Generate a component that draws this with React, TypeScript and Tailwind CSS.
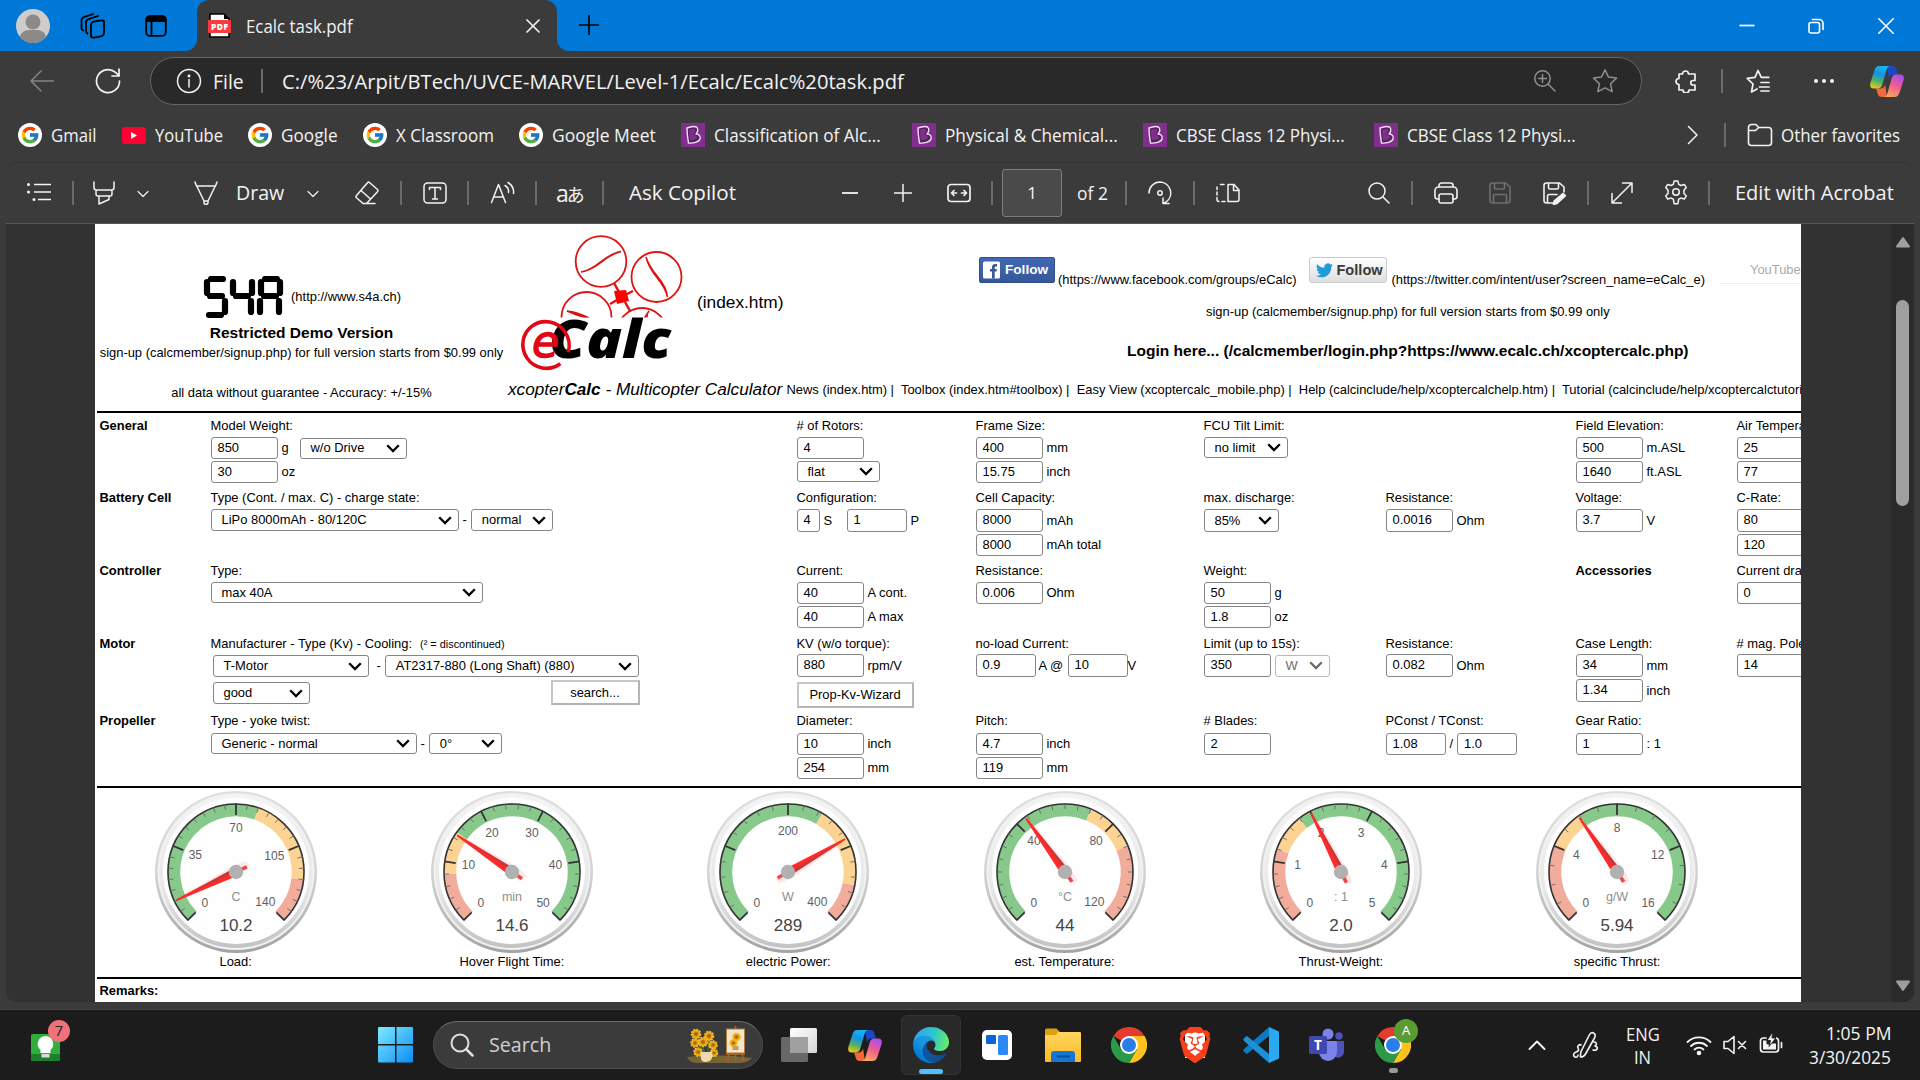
import { useLayoutEffect, useRef, type ReactNode } from "react";
import { FcGoogle } from "react-icons/fc";
import { SiBrave } from "react-icons/si";

/* ---------- shared helpers ---------- */

function Ui({ w, className = "", children }: { w: number; className?: string; children: string }) {
  const ref = useRef<HTMLSpanElement>(null);
  useLayoutEffect(() => {
    const el = ref.current;
    if (el && el.offsetWidth > 0) el.style.transform = `scaleX(${w / el.offsetWidth})`;
  }, [w]);
  return (
    <span className={`flex shrink-0 ${className}`} style={{ width: w }}>
      <span ref={ref} className="inline-block shrink-0 origin-left whitespace-nowrap font-['Open_Sans',sans-serif] leading-[26px]">
        {children}
      </span>
    </span>
  );
}

function Ico({ w = 24, h = 24, vb, className = "", sw = 1.5, children }: { w?: number; h?: number; vb?: string; className?: string; sw?: number; children: ReactNode }) {
  return (
    <svg width={w} height={h} viewBox={vb ?? `0 0 ${w} ${h}`} fill="none" stroke="currentColor" strokeWidth={sw} strokeLinecap="round" strokeLinejoin="round" className={`block shrink-0 ${className}`}>
      {children}
    </svg>
  );
}

const Sep = ({ className = "" }: { className?: string }) => <span className={`h-6 w-[2px] shrink-0 bg-[#6b6b6b] ${className}`} />;

function Copilot({ id, w, h, className = "" }: { id: string; w: number; h: number; className?: string }) {
  return (
    <svg width={w} height={h} viewBox="0 0 34 31" className={`block shrink-0 ${className}`}>
      <defs>
        <linearGradient id={`${id}a`} x1="0.5" y1="0" x2="0.2" y2="1">
          <stop offset="0" stopColor="#19b4f5" />
          <stop offset="0.35" stopColor="#1492e0" />
          <stop offset="0.65" stopColor="#4fb06c" />
          <stop offset="1" stopColor="#f6c70c" />
        </linearGradient>
        <linearGradient id={`${id}b`} x1="0.7" y1="0" x2="0.3" y2="1">
          <stop offset="0" stopColor="#a94ff0" />
          <stop offset="0.45" stopColor="#ec5a92" />
          <stop offset="1" stopColor="#fba65c" />
        </linearGradient>
      </defs>
      <path d="M17 0h5.500c2 0 3.200 1.200 3.700 3l1.700 5.500h-4c-3 0-4.200 1.500-5 4z" fill="#1b48c8" />
      <path d="M17 31h-5.500c-2 0-3.200-1.200-3.700-3l-1.700-5.500h4c3 0 4.200-1.500 5-4z" fill="#f4663c" />
      <path d="M9.500 0h10.500c-2 .3-2.900 1.800-3.500 4l-4.300 15c-.7 2.300-2 3.500-4.200 3.500H3.700C.5 22.500-.4 20 .4 17L4.500 4.200C5.400 1.400 6.900 0 9.500 0z" fill={`url(#${id}a)`} />
      <path d="M24.500 31H14c2-.3 2.900-1.800 3.500-4l4.300-15c.7-2.300 2-3.500 4.200-3.500h4.300c3.200 0 4.100 2.500 3.300 5.500l-4.100 12.800c-.9 2.800-2.400 4.200-5 4.200z" fill={`url(#${id}b)`} />
    </svg>
  );
}

/* ---------- browser chrome ---------- */

function TitleBar() {
  return (
    <div className="flex h-[51px] items-center bg-[#0078d7]">
      <svg width="34" height="34" viewBox="0 0 34 34" className="ml-4 shrink-0">
        <circle cx="17" cy="17" r="17" fill="#cfcdcb" />
        <circle cx="17" cy="13" r="7.500" fill="#8d8986" />
        <path d="M4 28c1-5 5-7 9-7h8c4 0 8 2 9 7a17 17 0 0 1-26 0z" fill="#8d8986" />
      </svg>
      <Ico w={26} h={26} className="ml-[30px] text-black" sw={1.800}>
        <rect x="11" y="8" width="13" height="16" rx="3" transform="skewY(-10) translate(0 3)" />
        <path d="M7.500 20.500c-1.200-.5-1.500-1.400-1.500-2.700V9.500c0-2 .8-2.800 2.500-3.400L18 3" />
        <path d="M3.200 17.500C2 17 1.500 16 1.500 14.700V7.500c0-2 .8-2.900 2.500-3.500L13 1.200" />
      </Ico>
      <Ico w={22} h={22} className="ml-[39px] text-black" sw={1.800}>
        <rect x="1.200" y="1.200" width="19.600" height="19.600" rx="3.500" />
        <path d="M1.500 6V4.500a3 3 0 0 1 3-3h13a3 3 0 0 1 3 3V6z" fill="currentColor" />
        <path d="M6.500 7v13" />
      </Ico>
      <div className="ml-[18px] flex h-full w-[384px] shrink-0">
        <span className="h-full w-3 bg-[#3b3b3b]">
          <span className="block h-full w-full rounded-br-[12px] bg-[#0078d7]" />
        </span>
        <div className="flex h-full w-[360px] items-center rounded-t-[12px] bg-[#3b3b3b] text-[#f0f0f0]">
          <svg width="24" height="25" viewBox="0 0 24 25" className="ml-[11px] shrink-0">
            <path d="M2 1h14l5 5v18H2z" fill="#fff" stroke="#000" strokeWidth="1.500" />
            <path d="M16 1l5 5h-5z" fill="#000" />
            <rect x="0" y="7" width="23" height="13" rx="1" fill="#f93b3e" />
            <text x="11.500" y="16.800" textAnchor="middle" fontFamily="Open Sans" fontWeight="800" fontSize="8.500" fill="#fff" textLength="17">PDF</text>
          </svg>
          <Ui w={107} className="ml-[14px] text-[17.500px]">Ecalc task.pdf</Ui>
          <Ico w={14} h={14} className="ml-[173px]" sw={1.700}>
            <path d="M1 1l12 12M13 1L1 13" />
          </Ico>
        </div>
        <span className="h-full w-3 bg-[#3b3b3b]">
          <span className="block h-full w-full rounded-bl-[12px] bg-[#0078d7]" />
        </span>
      </div>
      <Ico w={20} h={20} className="-mt-[1px] ml-[10px] text-black" sw={1.600}>
        <path d="M10 0v20M0 10h20" strokeLinecap="butt" />
      </Ico>
      <div className="ml-auto flex items-center text-white">
        <Ico w={16} h={16} sw={1.700}><path d="M.5 7.500h15" strokeLinecap="butt" /></Ico>
        <Ico w={16} h={16} className="ml-[53px]" sw={1.600}>
          <rect x="1" y="4.500" width="10.500" height="10.500" rx="2" />
          <path d="M4.500 1.500h6.500a4 4 0 0 1 4 4v6" />
        </Ico>
        <Ico w={16} h={16} className="ml-[54px] mr-[26px]" sw={1.600}><path d="M.8.8l14.400 14.400M15.200.8L.8 15.200" /></Ico>
      </div>
    </div>
  );
}

function AddressBar() {
  return (
    <div className="flex h-[60px] items-center text-[#f3f3f3]">
      <Ico w={24} h={22} className="ml-[30px] text-[#858585]"><path d="M24 11H1M11 1L1 11l10 10" /></Ico>
      <Ico w={26} h={26} className="ml-[41px]" sw={1.700}>
        <path d="M24.500 13a11.500 11.500 0 1 1-4-8.600l3.500 3.100" />
        <path d="M24 1v7h-7" />
      </Ico>
      <div className="ml-[29px] flex h-[48px] w-[1492px] shrink-0 items-center rounded-full border border-[#666] bg-[#292929]">
        <Ico w={26} h={26} className="ml-[25px]">
          <circle cx="13" cy="13" r="11.500" />
          <path d="M13 11.500v7.500" /><circle cx="13" cy="8" r=".7" />
        </Ico>
        <Ui w={31} className="ml-[11px] mt-[1px] text-[20px]">File</Ui>
        <Sep className="ml-[17px]" />
        <Ui w={622} className="ml-[19px] mt-[1px] text-[20px]">C:/%23/Arpit/BTech/UVCE-MARVEL/Level-1/Ecalc/Ecalc%20task.pdf</Ui>
        <Ico w={22} h={22} className="ml-[630px] text-[#8f8f8f]">
          <circle cx="8.500" cy="8.500" r="7.700" /><path d="M14 14l7 7M8.500 4.500v8M4.500 8.500h8" />
        </Ico>
        <Ico w={26} h={26} className="ml-[36px] text-[#8f8f8f]">
          <path d="M13 1.800l3.500 7.300 8 1-5.900 5.600 1.500 8L13 19.800l-7.100 3.900 1.500-8L1.500 10.100l8-1z" />
        </Ico>
      </div>
      <Ico w={24} h={24} className="ml-[32px]" sw={1.700}>
        <path d="M5 5h3.500a3 3 0 0 1 6 0H21v6.500h-2a2.200 2.200 0 0 0 0 4.500h2V21h-6a3 3 0 0 1-6 0H5v-5.500a3 3 0 0 1 0-6z" />
      </Ico>
      <Sep className="ml-[23px]" />
      <Ico w={26} h={26} className="ml-[22px]" sw={1.700}>
        <path d="M8 16l-5.800-5.600 7.800-1L13 2.500l3.300 6.800h7.500M8 16l-1.500 8 5.500-3M16 14.500h8M14.500 19h9.500M16 23h8" />
      </Ico>
      <Ico w={22} h={6} className="ml-[42px]" sw={0}>
        <g fill="currentColor"><circle cx="3" cy="3" r="2" /><circle cx="11" cy="3" r="2" /><circle cx="19" cy="3" r="2" /></g>
      </Ico>
      <Copilot id="cpt" w={34} h={31} className="ml-[35px]" />
    </div>
  );
}

const GIcon = () => (
  <span className="flex h-6 w-6 shrink-0 items-center justify-center rounded-full bg-white"><FcGoogle size={20} /></span>
);
const YtIcon = () => (
  <svg width="24" height="17" viewBox="0 0 24 17" className="shrink-0"><rect width="24" height="17" rx="3" fill="#ff0033" /><path d="M9 5v7l6-3.500z" fill="#fff" /></svg>
);
const BIcon = () => (
  <svg width="24" height="24" viewBox="0 0 24 24" className="shrink-0">
    <rect width="24" height="24" fill="#80308c" />
    <path d="M7.500 20q-1.500-8-1.500-15 6-2.500 9.500-1c2 1.500 1.500 5-.5 7 3.500 0 4.800 2.500 4 5-1 3-7 4.500-11.500 4z" fill="#56215f" stroke="#f1dff3" strokeWidth="1.400" strokeLinejoin="round" />
    <path d="M9 17q-1-5-1-10 4-1.500 6-.5 1 2.500-2 5 4 .5 4 3.500-2 2-7 2z" fill="#80308c" />
  </svg>
);

const bookmarks: { icon: ReactNode; text: string; w: number; ml: string }[] = [
  { icon: <GIcon />, text: "Gmail", w: 45, ml: "ml-[18px]" },
  { icon: <YtIcon />, text: "YouTube", w: 68, ml: "ml-[26px]" },
  { icon: <GIcon />, text: "Google", w: 57, ml: "ml-[25px]" },
  { icon: <GIcon />, text: "X Classroom", w: 98, ml: "ml-[25px]" },
  { icon: <GIcon />, text: "Google Meet", w: 104, ml: "ml-[25px]" },
  { icon: <BIcon />, text: "Classification of Alc...", w: 167, ml: "ml-[25px]" },
  { icon: <BIcon />, text: "Physical & Chemical...", w: 173, ml: "ml-[31px]" },
  { icon: <BIcon />, text: "CBSE Class 12 Physi...", w: 169, ml: "ml-[25px]" },
  { icon: <BIcon />, text: "CBSE Class 12 Physi...", w: 169, ml: "ml-[29px]" },
];

function Bookmarks() {
  return (
    <div className="flex h-[51px] items-center pb-[3px] text-[17.500px] text-[#f3f3f3]">
      {bookmarks.map((b, i) => (
        <div key={i} className={`flex items-center ${b.ml}`}>
          {b.icon}
          <Ui w={b.w} className="-mt-[1px] ml-[9px]">{b.text}</Ui>
        </div>
      ))}
      <Ico w={12} h={20} className="ml-[111px]" sw={1.500}><path d="M1.500 1.500l8.500 8.500-8.500 8.500" /></Ico>
      <Sep className="ml-[25px]" />
      <Ico w={26} h={24} className="ml-[21px]" sw={1.600}>
        <path d="M1.500 4.500a3 3 0 0 1 3-3h4.300l3 3h9.700a3 3 0 0 1 3 3V19.500a3 3 0 0 1-3 3h-17a3 3 0 0 1-3-3zM1.500 7.500h7l3.300-3" />
      </Ico>
      <Ui w={119} className="-mt-[1px] ml-[8px]">Other favorites</Ui>
    </div>
  );
}

const Chev = ({ className = "" }: { className?: string }) => (
  <Ico w={12} h={8} className={className} sw={1.200}><path d="M1 1.500l5 5 5-5" /></Ico>
);

function PdfToolbar() {
  return (
    <div className="mx-[6px] flex h-[62px] items-center rounded-t-[12px] border-b border-t border-b-[#585858] border-t-[#343434] text-[20px] text-[#f3f3f3]">
      <Ico className="-mt-[2px] ml-[21px]" sw={1.700}>
        <path d="M7 4.500h17M7 12h17M11 19.500h13" strokeLinecap="butt" />
        <g fill="currentColor" stroke="none"><circle cx="1.500" cy="4.500" r="1.500" /><circle cx="1.500" cy="12" r="1.500" /><circle cx="7" cy="19.500" r="1.500" /></g>
      </Ico>
      <Sep className="ml-[21px]" />
      <Ico className="ml-[18px]"><path d="M2 1v5.500a2.500 2.500 0 0 0 2.500 2.500h15A2.500 2.500 0 0 0 22 6.500V1M4 9v4c0 1.500 1 2 2 2h12c1 0 2-.5 2-2V9M7 15v8l10-4.500V15" /></Ico>
      <Chev className="ml-[21px] mt-[2px]" />
      <Ico className="ml-[45px]"><path d="M1 1l1.500 4h19L23 1M3 5.500l7 14.500h4l7-14.500M10 20v1.500c0 2.500 4 2.500 4 0V20" /></Ico>
      <Ui w={48} className="ml-[18px]">Draw</Ui>
      <Chev className="ml-[23px] mt-[2px]" />
      <Ico className="ml-[36px]"><path d="M14.500 1.500l8 7c.7.700.7 1.500 0 2.200L11.500 22.500H8L1.500 16.800c-.7-.7-.7-1.500 0-2.200L12.500 1.700c.6-.6 1.400-.7 2-.2zM6 9.500l9.500 8.500M11 22.500h9" /></Ico>
      <Sep className="ml-[21px]" />
      <Ico className="ml-[21px]"><rect x="1" y="2" width="22" height="20" rx="3.500" /><path d="M6.500 8.500V6.500h11v2M12 6.500v11.500M9.500 18h5" /></Ico>
      <Sep className="ml-[20px]" />
      <Ico w={26} className="ml-[21px]"><path d="M1.500 21.500L8.500 3.500l7 18M4 16h9M15 4.500a7 7 0 0 1 3.500 7M18 1.500c4 2.500 6 6.500 5.500 11" /></Ico>
      <Sep className="ml-[19px]" />
      <span className="ml-[19px] flex w-[27px] shrink-0 items-baseline whitespace-nowrap font-['Open_Sans'] text-[23px] leading-[24px]">
        a<span className="-ml-[2px] font-['Noto_Sans_CJK_JP',sans-serif] text-[18px] leading-[24px]">あ</span>
      </span>
      <Sep className="ml-[19px]" />
      <Ui w={107} className="ml-[25px]">Ask Copilot</Ui>
      <Ico w={16} className="ml-[106px]" sw={1.800}><path d="M0 12h16" strokeLinecap="butt" /></Ico>
      <Ico w={18} className="ml-[36px]"><path d="M9 3.500v17M.5 12h17" /></Ico>
      <Ico className="ml-[35px]" sw={1.700}><rect x="1" y="3.500" width="22" height="17" rx="3" /><path d="M4.500 12h5M4.500 12l2.500-2.500M4.500 12l2.500 2.500M19.500 12h-5M19.500 12L17 9.500M19.500 12L17 14.500" /></Ico>
      <Sep className="ml-[20px]" />
      <div className="ml-[9px] flex h-[48px] w-[60px] shrink-0 items-center justify-center rounded-[3px] border border-[#7d7d7d] bg-[#4a4a4a]">
        <span className="font-['Open_Sans'] text-[17px]">1</span>
      </div>
      <Ui w={31} className="ml-[15px] text-[18px]">of 2</Ui>
      <Sep className="ml-[17px]" />
      <Ico className="ml-[21px]"><path d="M1 12A11 11 0 0 1 12 1a11 11 0 0 1 6 20l-2.500 1.500M21 22.500h-6v-5.500" /><circle cx="12" cy="12" r="2.200" /></Ico>
      <Sep className="ml-[21px]" />
      <Ico className="ml-[21px]"><path d="M12 3.500h6l5 5.500v9.500a2 2 0 0 1-2 2h-9zM17.500 3.500V9.500H23" /><path d="M8 3.500H4.500M1 6v2.500M1 11v3M1 16.500v2c0 1 .8 2 2 2M6 20.500h3" /></Ico>
      <Ico w={22} className="ml-[128px]"><circle cx="9" cy="10" r="8" /><path d="M15 16l6 6" /></Ico>
      <Sep className="ml-[21px]" />
      <Ico className="ml-[21px]" sw={1.600}><path d="M5 6V4.500A2.500 2.500 0 0 1 7.500 2h9A2.500 2.500 0 0 1 19 4.500V6M5 18H3.500A2.500 2.500 0 0 1 1 15.500V9.500A3.500 3.500 0 0 1 4.500 6h15A3.500 3.500 0 0 1 23 9.500v6a2.500 2.500 0 0 1-2.500 2.500H19" /><rect x="5" y="13" width="14" height="9" rx="2" /></Ico>
      <Ico className="ml-[30px] text-[#6f6f6f]" sw={1.600}><path d="M2 4.500A2.500 2.500 0 0 1 4.500 2h13L22 6v13.500a2.500 2.500 0 0 1-2.500 2.500h-15A2.500 2.500 0 0 1 2 19.500zM6.500 2v4.500c0 1 .5 1.500 1.500 1.500h7c1 0 1.500-.5 1.500-1.500V2M5.500 22v-7c0-1 .5-1.500 1.500-1.500h10c1 0 1.500.5 1.500 1.500v7" /></Ico>
      <Ico className="ml-[30px]" sw={1.600}><path d="M11 22H4.500A2.500 2.500 0 0 1 2 19.500v-15A2.500 2.500 0 0 1 4.500 2h13L22 6v5M6.500 2v4.500c0 1 .5 1.500 1.500 1.500h7c1 0 1.500-.5 1.500-1.500V2M5.500 22v-7c0-1 .5-1.500 1.500-1.500h8" /><path d="M21 12.500l2.500 2-8.500 8-3.500.8.800-3.500z" fill="currentColor" /></Ico>
      <Sep className="ml-[21px]" />
      <Ico className="ml-[21px]"><path d="M2 22L22 2M12.500 2H22v9.500M2 12.500V22h9.500" /></Ico>
      <Ico w={26} h={26} vb="0 0 24 24" className="-mt-[2px] ml-[29px]" sw={1.400}>
        <path d="M10.300 1h3.400l.8 3.200 2 1 3.100-1 1.900 2.900-2.200 2.500v2.800l2.200 2.500-1.900 2.900-3.100-1-2 1-.8 4.200h-3.400l-.8-4.200-2-1-3.100 1-1.900-2.900 2.200-2.500V9.600L2.500 7.100l1.900-2.900 3.100 1 2-1z" transform="translate(0 .8)" />
        <circle cx="12" cy="12" r="3" />
      </Ico>
      <Sep className="ml-[19px]" />
      <Ui w={159} className="ml-[25px]">Edit with Acrobat</Ui>
    </div>
  );
}

/* ---------- document header ---------- */

function S4ALogo() {
  const seg = (x: number, on: string) => {
    const L: Record<string, [number, number, number, number]> = {
      a: [x + 5, 3, x + 17, 3],
      f: [x + 1, 6, x + 1, 17],
      b: [x + 20, 6, x + 20, 17],
      g: [x + 4, 20, x + 16, 20],
      e: [x, 25, x, 36],
      c: [x + 19, 25, x + 19, 36],
      d: [x + 3, 39, x + 15, 39],
    };
    return on.split("").map((k) => <line key={k + x} x1={L[k][0]} y1={L[k][1]} x2={L[k][2]} y2={L[k][3]} />);
  };
  return (
    <svg width="84" height="42" viewBox="0 0 84 42" className="shrink-0" stroke="#000" strokeWidth="6.200" strokeLinecap="round" role="img" aria-label="S4A">
      {seg(4, "afgcd")}
      {seg(30, "fgbc")}
      {seg(58, "abfgec")}
    </svg>
  );
}

function ECalcLogo() {
  return (
    <svg width="182" height="137" viewBox="508 235 182 137" className="shrink-0">
      <defs>
        <clipPath id="cut"><rect x="508" y="235" width="182" height="82.500" /></clipPath>
      </defs>
      <g fill="none" stroke="#e01414" strokeWidth="1.800" clipPath="url(#cut)">
        <circle cx="601" cy="261.500" r="25.300" />
        <circle cx="656.500" cy="277" r="25" />
        <circle cx="586.500" cy="317" r="25" />
        <circle cx="642" cy="333" r="25" />
        <path d="M614 283l5 9M633 291l-8 4M610 304l7-4M630 311l-5-9" strokeWidth="2.500" />
        <path d="M614 292l12-1 3 11-12 3z" fill="#ff0000" stroke="none" transform="translate(0 -1)" />
        <g fill="#d11" stroke="#d11" strokeWidth="1.500">
          <path d="M581 272q8-1 20-10.500 12-9 20-10-9 2-20 11-12 9-20 9.500z" />
          <path d="M646 257q2 9 10.500 20 9 11 11 20-1-10-10-20.500-9-11-11.500-19.500z" />
          <path d="M567 311q10 1 22 7h-3q-10-3-19-7z" />
          <path d="M647 317q0-4 2-6l-4 6z" />
        </g>
      </g>
      <text x="549" y="358" fontFamily="Open Sans" fontWeight="800" fontStyle="italic" fontSize="53" textLength="122" lengthAdjust="spacingAndGlyphs" fill="#000">Calc</text>
      <ellipse cx="546" cy="345" rx="23.500" ry="23" fill="none" stroke="#e30613" strokeWidth="3.500" strokeDasharray="130 14" transform="rotate(55 546 345)" />
      <text x="532" y="357" fontFamily="DejaVu Sans" fontStyle="italic" fontSize="45" textLength="27" lengthAdjust="spacingAndGlyphs" fill="#e30613" stroke="#e30613" strokeWidth="1.300">e</text>
    </svg>
  );
}

function DocHeader() {
  return (
    <div className="flex h-[187px] items-start">
      <div className="flex w-[413px] shrink-0 flex-col items-center pt-[52px]">
        <div className="flex items-center gap-[5px]"><S4ALogo /><span>(http://www.s4a.ch)</span></div>
        <div className="mt-[5px] text-[15.500px] font-bold leading-[20px]">Restricted Demo Version</div>
        <div className="mt-[1px] leading-[18px]">sign-up (calcmember/signup.php) for full version starts from $0.99 only</div>
        <div className="mt-[22px] leading-[18px]">all data without guarantee - Accuracy: +/-15%</div>
      </div>
      <div className="w-[279px] shrink-0 pt-[11px]">
        <div className="flex">
          <ECalcLogo />
          <span className="ml-[7px] mt-[56px] text-[17.300px] leading-[22px]">(index.htm)</span>
        </div>
        <div className="mt-[6px] text-[17.200px] italic leading-[22px]">xcopter<b>Calc</b> - Multicopter Calculator</div>
      </div>
      <div className="w-[1014px] shrink-0 overflow-hidden pt-[33px]">
        <div className="flex h-[34px] items-start">
          <div className="ml-[192px] flex h-[26px] w-[76px] shrink-0 items-center rounded-[2px] border border-[#2f4f8f] bg-gradient-to-b from-[#4268b3] to-[#365899]">
            <svg width="17" height="18" viewBox="0 0 17 18" className="ml-[3px]"><rect width="17" height="17" y=".5" rx="1.500" fill="#fff" /><path d="M9 17.500v-7H7V8h2V6.200C9 4 10.300 3 12.200 3H14v2.500h-1.300c-.8 0-1 .4-1 1V8h2.200l-.4 2.500h-1.800v7z" fill="#3b5998" /></svg>
            <span className="ml-[5px] text-[13.600px] font-bold text-white">Follow</span>
          </div>
          <span className="ml-[3px] mt-[14px] leading-[18px]">(https://www.facebook.com/groups/eCalc)</span>
          <div className="ml-[13px] flex h-[26px] w-[78px] shrink-0 items-center rounded-[3px] border border-[#ccc] bg-gradient-to-b from-white to-[#dedede]">
            <svg width="17" height="15" viewBox="0 0 24 20" className="ml-[6px]"><path d="M24 2.400c-.9.400-1.800.7-2.800.8 1-.6 1.800-1.600 2.200-2.700-1 .6-2 1-3.100 1.200a4.900 4.900 0 0 0-8.400 4.500C7.700 6 4.100 4 1.700 1a4.900 4.900 0 0 0 1.500 6.600c-.8 0-1.600-.2-2.200-.6v.1c0 2.400 1.700 4.400 3.900 4.800-.7.200-1.500.2-2.200.1.600 2 2.400 3.400 4.600 3.400A9.900 9.900 0 0 1 0 17.500 13.900 13.900 0 0 0 7.500 19.700c9.100 0 14-7.500 14-14v-.6c1-.7 1.800-1.600 2.500-2.700z" fill="#1f9bd7" /></svg>
            <span className="ml-[3px] text-[14.600px] font-bold text-[#3a3a3a]">Follow</span>
          </div>
          <span className="ml-[4px] mt-[14px] leading-[18px]">(https://twitter.com/intent/user?screen_name=eCalc_e)</span>
          <span className="ml-[14px] flex h-[27px] w-[90px] shrink-0 items-center border-b border-[#ececec] pl-[31px] text-[#aaa]">YouTube</span>
        </div>
        <div className="ml-[419px] mt-[12px] leading-[18px]">sign-up (calcmember/signup.php) for full version starts from $0.99 only</div>
        <div className="ml-[340px] mt-[20px] text-[15.530px] font-bold leading-[20px]">Login here... (/calcmember/login.php?https://www.ecalc.ch/xcoptercalc.php)</div>
        <div className="-ml-[0.500px] mt-[20px] whitespace-pre leading-[18px]">{"News (index.htm) |  Toolbox (index.htm#toolbox) |  Easy View (xcoptercalc_mobile.php) |  Help (calcinclude/help/xcoptercalchelp.htm) |  Tutorial (calcinclude/help/xcoptercalctutorial.htm)"}</div>
      </div>
    </div>
  );
}

/* ---------- calculator form ---------- */

function In({ v, c = "w-[67px] h-[22px]" }: { v: string; c?: string }) {
  return <span className={`flex shrink-0 items-center rounded-[3px] border border-[#858585] bg-white pb-[1px] pl-[6px] ${c}`}>{v}</span>;
}

function Sel({ v, c, dim = false }: { v: string; c: string; dim?: boolean }) {
  return (
    <span className={`flex shrink-0 items-center justify-between rounded-[3px] border bg-white pl-[10px] pr-[6px] ${c} ${dim ? "border-[#bbb] text-[#6b6b6b]" : "border-[#858585]"}`}>
      {v}
      <svg width="14" height="9" viewBox="0 0 14 9" fill="none" stroke="currentColor" strokeWidth="2.300"><path d="M1.200 1.200L7 7l5.800-5.800" /></svg>
    </span>
  );
}

const Row = ({ c = "", children }: { c?: string; children: ReactNode }) => <div className={`flex items-center gap-[4px] ${c}`}>{children}</div>;

function Cell({ w, label, bold = false, gap = "pt-[2px]", children }: { w: string; label: ReactNode; bold?: boolean; gap?: string; children?: ReactNode }) {
  return (
    <div className={`shrink-0 ${w}`}>
      <div className={`h-[18px] leading-[18px] ${bold ? "font-bold" : ""}`}>{label}</div>
      <div className={`flex flex-col items-start gap-[2.400px] ${gap}`}>{children}</div>
    </div>
  );
}

const W0 = "w-[111px]", W1 = "w-[586px]", W2 = "w-[179px]", W3 = "w-[228px]", W4 = "w-[182px]", W5 = "w-[190px]", W6 = "w-[161px]", W7 = "w-[100px]";
const TALL = "w-[67px] h-[23px]";

function Form() {
  return (
    <div className="ml-[4.500px] mt-[4px] h-[369px]">
      <div className="flex h-[72px]">
        <Cell w={W0} label="General" bold />
        <Cell w={W1} label="Model Weight:">
          <Row><In v="850" /><span className="w-[14px]">g</span><Sel v="w/o Drive" c="w-[107px] h-[21px]" /></Row>
          <Row><In v="30" />oz</Row>
        </Cell>
        <Cell w={W2} label="# of Rotors:"><In v="4" /><Sel v="flat" c="w-[83px] h-[21px]" /></Cell>
        <Cell w={W3} label="Frame Size:"><Row><In v="400" />mm</Row><Row><In v="15.75" />inch</Row></Cell>
        <Cell w={W4} label="FCU Tilt Limit:"><Sel v="no limit" c="w-[84px] h-[21px]" /></Cell>
        <Cell w={W5} label="" />
        <Cell w={W6} label="Field Elevation:"><Row><In v="500" />m.ASL</Row><Row><In v="1640" />ft.ASL</Row></Cell>
        <Cell w={W7} label="Air Temperature:"><In v="25" c="w-[80px] h-[22px]" /><In v="77" c="w-[80px] h-[22px]" /></Cell>
      </div>
      <div className="flex h-[73px]">
        <Cell w={W0} label="Battery Cell" bold />
        <Cell w={W1} label="Type (Cont. / max. C) - charge state:">
          <Row><Sel v="LiPo 8000mAh - 80/120C" c="w-[248px] h-[22px]" />-<Sel v="normal" c="w-[82px] h-[22px]" /></Row>
        </Cell>
        <Cell w={W2} label="Configuration:">
          <Row><In v="4" c="w-[23px] h-[23px]" /><span className="w-[19px]">S</span><In v="1" c="w-[60px] h-[23px]" />P</Row>
        </Cell>
        <Cell w={W3} label="Cell Capacity:"><Row><In v="8000" c={TALL} />mAh</Row><Row><In v="8000" />mAh total</Row></Cell>
        <Cell w={W4} label="max. discharge:"><Sel v="85%" c="w-[75px] h-[23px]" /></Cell>
        <Cell w={W5} label="Resistance:"><Row><In v="0.0016" c={TALL} />Ohm</Row></Cell>
        <Cell w={W6} label="Voltage:"><Row><In v="3.7" c={TALL} />V</Row></Cell>
        <Cell w={W7} label="C-Rate:"><In v="80" c="w-[80px] h-[23px]" /><In v="120" c="w-[80px] h-[22px]" /></Cell>
      </div>
      <div className="flex h-[73px]">
        <Cell w={W0} label="Controller" bold />
        <Cell w={W1} label="Type:"><Sel v="max 40A" c="w-[272px] h-[21px]" /></Cell>
        <Cell w={W2} label="Current:"><Row><In v="40" />A cont.</Row><Row><In v="40" />A max</Row></Cell>
        <Cell w={W3} label="Resistance:"><Row><In v="0.006" />Ohm</Row></Cell>
        <Cell w={W4} label="Weight:"><Row><In v="50" />g</Row><Row><In v="1.8" />oz</Row></Cell>
        <Cell w={W5} label="" />
        <Cell w={W6} label="Accessories" bold />
        <Cell w={W7} label="Current drain:"><In v="0" c="w-[80px] h-[22px]" /></Cell>
      </div>
      <div className="flex h-[77px]">
        <Cell w={W0} label="Motor" bold />
        <Cell w={W1} gap="pt-[2px]" label={<>Manufacturer - Type (Kv) - Cooling:<span className="ml-[8px] text-[10.900px]">(² = discontinued)</span></>}>
          <Row c="ml-[2px]"><Sel v="T-Motor" c="w-[156px] h-[22px]" /><span className="ml-[4px]">-</span><Sel v="AT2317-880 (Long Shaft) (880)" c="w-[254px] h-[22px]" /></Row>
          <div className="ml-[2px] flex w-[427px] items-start justify-between">
            <Sel v="good" c="mt-[3px] w-[97px] h-[22px]" />
            <span className="mt-[1px] flex h-[25px] w-[89px] items-center justify-center border-2 border-b-[#b4b4b4] border-l-[#c6c6c6] border-r-[#b4b4b4] border-t-[#c6c6c6]">search...</span>
          </div>
        </Cell>
        <Cell w={W2} gap="pt-[1px]" label="KV (w/o torque):">
          <Row><In v="880" c={TALL} />rpm/V</Row>
          <span className="mt-[3px] flex h-[26px] w-[117px] items-center justify-center border-2 border-b-[#b4b4b4] border-l-[#c6c6c6] border-r-[#b4b4b4] border-t-[#c6c6c6] pb-[1px]">Prop-Kv-Wizard</span>
        </Cell>
        <Cell w={W3} gap="pt-[1px]" label="no-load Current:">
          <div className="flex items-center"><In v="0.9" c="w-[60px] h-[23px]" /><span className="w-[32px] whitespace-nowrap pl-[3px]">A @</span><In v="10" c="w-[60px] h-[23px]" />V</div>
        </Cell>
        <Cell w={W4} gap="pt-[1px]" label="Limit (up to 15s):"><Row><In v="350" c={TALL} /><Sel v="W" dim c="w-[55px] h-[22px]" /></Row></Cell>
        <Cell w={W5} gap="pt-[1px]" label="Resistance:"><Row><In v="0.082" c={TALL} />Ohm</Row></Cell>
        <Cell w={W6} gap="pt-[1px]" label="Case Length:"><Row><In v="34" c={TALL} />mm</Row><Row><In v="1.34" c={TALL} />inch</Row></Cell>
        <Cell w={W7} gap="pt-[1px]" label="# mag. Poles:"><In v="14" c="w-[80px] h-[23px]" /></Cell>
      </div>
      <div className="flex h-[74px]">
        <Cell w={W0} label="Propeller" bold />
        <Cell w={W1} gap="pt-[3px]" label="Type - yoke twist:">
          <Row><Sel v="Generic - normal" c="w-[206px] h-[21px]" />-<Sel v="0°" c="w-[73px] h-[21px]" /></Row>
        </Cell>
        <Cell w={W2} gap="pt-[3px]" label="Diameter:"><Row><In v="10" />inch</Row><Row><In v="254" />mm</Row></Cell>
        <Cell w={W3} gap="pt-[3px]" label="Pitch:"><Row><In v="4.7" />inch</Row><Row><In v="119" />mm</Row></Cell>
        <Cell w={W4} gap="pt-[3px]" label="# Blades:"><In v="2" /></Cell>
        <Cell w={W5} gap="pt-[3px]" label="PConst / TConst:"><Row><In v="1.08" c="w-[60px] h-[22px]" />/<In v="1.0" c="w-[60px] h-[22px]" /></Row></Cell>
        <Cell w={W6} gap="pt-[3px]" label="Gear Ratio:"><Row><In v="1" />: 1</Row></Cell>
      </div>
    </div>
  );
}

/* ---------- gauges ---------- */

type Gauge = { caption: string; unit: string; value: string; num: number; max: number; step: number; minor: number; zones: [number, string][] };
const G = "#86c98a", O = "#fdd393", R = "#f2ac9c";
const gauges: Gauge[] = [
  { caption: "Load:", unit: "C", value: "10.2", num: 10.2, max: 140, step: 35, minor: 7, zones: [[80, G], [120, O], [140, R]] },
  { caption: "Hover Flight Time:", unit: "min", value: "14.6", num: 14.6, max: 50, step: 10, minor: 5, zones: [[8, R], [15, O], [50, G]] },
  { caption: "electric Power:", unit: "W", value: "289", num: 289, max: 400, step: 100, minor: 5, zones: [[245, G], [350, O], [400, R]] },
  { caption: "est. Temperature:", unit: "°C", value: "44", num: 44, max: 120, step: 40, minor: 8, zones: [[70, G], [90, O], [120, R]] },
  { caption: "Thrust-Weight:", unit: ": 1", value: "2.0", num: 2, max: 5, step: 1, minor: 5, zones: [[1.2, R], [1.8, O], [5, G]] },
  { caption: "specific Thrust:", unit: "g/W", value: "5.94", num: 5.94, max: 16, step: 4, minor: 4, zones: [[4, R], [6, O], [16, G]] },
];

const pt = (f: number, r: number): [number, number] => {
  const a = ((-135 + 270 * f) * Math.PI) / 180;
  return [82 + r * Math.sin(a), 82 - r * Math.cos(a)];
};
const arc = (f0: number, f1: number, r: number) => {
  const [x0, y0] = pt(f0, r), [x1, y1] = pt(f1, r);
  return `M${x0} ${y0}A${r} ${r} 0 ${(f1 - f0) * 270 > 180 ? 1 : 0} 1 ${x1} ${y1}`;
};

function GaugeView({ g }: { g: Gauge }) {
  const ticks: ReactNode[] = [];
  const labels: ReactNode[] = [];
  const count = (g.max / g.step) * g.minor;
  for (let i = 0; i <= count; i++) {
    const major = i % g.minor === 0;
    const f = i / count;
    const [x0, y0] = pt(f, major ? 57 : 63), [x1, y1] = pt(f, 68.5);
    ticks.push(<line key={i} x1={x0} y1={y0} x2={x1} y2={y1} stroke={major ? "#333" : "#666"} strokeWidth={major ? 1.8 : 0.9} />);
    if (major) {
      const n = (i / g.minor) * g.step;
      if (g.max === 400 && (n === 100 || n === 300)) continue;
      const [lx, ly] = pt(f, n >= 100 ? 41.5 : 44);
      labels.push(<text key={i} x={lx} y={ly + 4.3} textAnchor="middle" fontSize="12" fill="#606060">{n}</text>);
    }
  }
  let from = 0;
  const zones = g.zones.map(([to, color]) => {
    const d = arc(from / g.max, to / g.max, 62);
    from = to;
    return <path key={to} d={d} fill="none" stroke={color} strokeWidth="12.500" />;
  });
  return (
    <div className="flex w-[276.300px] shrink-0 flex-col items-center">
      <svg width="164" height="164" viewBox="0 0 164 164" fontFamily="Liberation Sans">
        <circle cx="82" cy="82" r="81" fill="url(#rim)" />
        <circle cx="82" cy="81.500" r="78.500" fill="#f1f1f1" />
        <circle cx="82" cy="81.500" r="76.500" fill="url(#rim2)" />
        <circle cx="82" cy="81" r="73" fill="#fefefe" />
        {zones}
        <path d={arc(0, 1, 68)} fill="none" stroke="#333" strokeWidth="1.600" />
        {ticks}
        {labels}
        <text x="82" y="111" textAnchor="middle" fontSize="12.500" fill="#8f8f8f">{g.unit}</text>
        <text x="82" y="141" textAnchor="middle" fontSize="17" fill="#444">{g.value}</text>
        <g transform={`rotate(${-135 + (270 * g.num) / g.max} 82 82)`}>
          <path d="M82 17l4.500 57v14l-1.500 6h-6l-1.500-6V74z" fill="#c33" opacity=".1" transform="translate(2 2)" />
          <path d="M81.100 16h1.800l3 60h-7.800z" fill="#ff2a2a" />
          <path d="M82.300 30l3.300 46h-2.600z" fill="#8a4a4a" opacity=".6" />
          <path d="M80.200 88h3.600v6h-3.600z" fill="#f04848" />
        </g>
        <circle cx="82" cy="82" r="7.200" fill="#b1b1b1" />
      </svg>
      <div className="-mt-[1px] leading-[18px]">{g.caption}</div>
    </div>
  );
}

function Document() {
  return (
    <div className="w-[1706px] shrink-0 overflow-hidden whitespace-nowrap bg-white font-['Liberation_Sans',Arial,sans-serif] text-[12.930px] leading-[16px] text-black">
      <svg width="0" height="0" className="absolute">
        <defs>
          <linearGradient id="rim" x1="0" y1="0" x2="0" y2="1"><stop offset="0" stopColor="#dedede" /><stop offset=".5" stopColor="#d4d4d4" /><stop offset="1" stopColor="#a3a3a3" /></linearGradient>
          <linearGradient id="rim2" x1="0" y1="0" x2="0" y2="1"><stop offset="0" stopColor="#f4f4f4" /><stop offset=".6" stopColor="#e9e9e9" /><stop offset="1" stopColor="#c2c2c2" /></linearGradient>
        </defs>
      </svg>
      <DocHeader />
      <div className="ml-[2px] h-[2px] bg-black" />
      <Form />
      <div className="ml-[2px] h-[2px] bg-black" />
      <div className="ml-[2.500px] mt-[2px] flex h-[187px]">{gauges.map((g) => <GaugeView key={g.caption} g={g} />)}</div>
      <div className="ml-[2px] h-[2px] bg-black" />
      <div className="ml-[4.500px] mt-[3px] font-bold leading-[18px]">Remarks:</div>
    </div>
  );
}

function Viewer() {
  return (
    <div className="mx-[6px] flex h-[778px] overflow-hidden rounded-b-[10px] bg-[#323232]">
      <div className="w-[89px] shrink-0" />
      <Document />
      <div className="w-[90px] shrink-0" />
      <div className="flex w-[23px] shrink-0 flex-col items-center bg-[#2b2b2b] pt-[12px]">
        <svg width="16" height="12" viewBox="0 0 16 12"><path d="M8 2l6 8.500H2z" fill="#9f9f9f" stroke="#9f9f9f" strokeWidth="2" strokeLinejoin="round" /></svg>
        <div className="mt-[52px] h-[206px] w-[13px] rounded-full bg-[#9f9f9f]" />
        <svg width="16" height="12" viewBox="0 0 16 12" className="mb-[10px] mt-auto"><path d="M8 10L2 1.500h12z" fill="#9f9f9f" stroke="#9f9f9f" strokeWidth="2" strokeLinejoin="round" /></svg>
      </div>
    </div>
  );
}

/* ---------- taskbar ---------- */

function EdgeLogo() {
  return (
    <svg width="36" height="36" viewBox="0 0 256 256">
      <defs>
        <linearGradient id="eg1" x1="63" y1="178" x2="241" y2="178" gradientUnits="userSpaceOnUse"><stop offset="0" stopColor="#0c59a4" /><stop offset="1" stopColor="#114a8b" /></linearGradient>
        <linearGradient id="eg2" x1="157" y1="100" x2="46" y2="222" gradientUnits="userSpaceOnUse"><stop offset="0" stopColor="#1b9de2" /><stop offset=".5" stopColor="#1595df" /><stop offset="1" stopColor="#0078d4" /></linearGradient>
        <linearGradient id="eg3" x1="20" y1="60" x2="250" y2="120" gradientUnits="userSpaceOnUse"><stop offset="0" stopColor="#35a8e8" /><stop offset=".5" stopColor="#2bc3d2" /><stop offset="1" stopColor="#66eb6e" /></linearGradient>
      </defs>
      <g transform="translate(-4.630 -4.920)">
        <path fill="url(#eg1)" d="M235.680 195.460a93.730 93.730 0 01-10.540 4.710 101.870 101.870 0 01-35.900 6.460c-47.320 0-88.540-32.550-88.540-74.320A31.480 31.480 0 01117.130 105c-42.800 1.800-53.800 46.400-53.800 72.530 0 73.880 68.090 81.370 82.760 81.370 7.910 0 19.840-2.300 27-4.560l1.310-.440a128.340 128.340 0 0066.600-52.800 4 4 0 00-5.320-5.640z" />
        <path fill="url(#eg2)" d="M110.340 246.340A79.200 79.200 0 0187.600 225a80.720 80.720 0 0129.530-120c3.120-1.470 8.450-4.130 15.540-4a32.350 32.350 0 0125.690 13 31.880 31.880 0 016.360 18.660c0-.210 24.460-79.600-80-79.600-43.900 0-80 41.660-80 78.210a130.150 130.150 0 0012.110 56 128 128 0 00156.380 67.110 75.550 75.550 0 01-62.780-8z" />
        <path fill="url(#eg3)" d="M156.940 153.780c-.810 1.050-3.300 2.500-3.300 5.660 0 2.610 1.700 5.120 4.720 7.230 14.380 10 41.490 8.680 41.560 8.680a59.560 59.560 0 0030.270-8.350A61.380 61.380 0 00260.630 114c.260-22.410-8-37.310-11.340-43.910C228.090 28.760 182.350 5 132.620 5a128 128 0 00-128 126.200c.480-36.540 36.800-66.050 80-66.050 3.500 0 23.460.340 42 10.070 16.340 8.580 24.900 18.940 30.850 29.210 6.180 10.670 7.280 24.150 7.280 29.520s-2.740 13.330-7.810 19.830z" />
      </g>
    </svg>
  );
}

const ChromeLogo = () => (
  <svg width="36" height="36" viewBox="0 0 36 36">
    <path d="M18 18L2.400 9A18 18 0 0 1 33.600 9z" fill="#e33b2e" />
    <path d="M33.600 9A18 18 0 0 1 18 36l7.800-13.500L18 9z" fill="#fcc31e" />
    <path d="M2.400 9A18 18 0 0 0 18 36l7.800-13.500H10.200z" fill="#2a9a48" />
    <circle cx="18" cy="18" r="9" fill="#fff" />
    <circle cx="18" cy="18" r="7" fill="#2b7de9" />
  </svg>
);

function Sunflower({ x, y, r = 4.5 }: { x: number; y: number; r?: number }) {
  return (
    <g>
      <circle cx={x} cy={y} r={r} fill="#e8a313" stroke="#f3c22e" strokeWidth="1.600" strokeDasharray="1.800 1.200" />
      <circle cx={x} cy={y} r={r * 0.45} fill="#a8680e" />
    </g>
  );
}

function Taskbar() {
  return (
    <div className="flex h-[70px] items-center bg-[#1c1c1c] text-[#f3f3f3]">
      <svg width="44" height="48" viewBox="0 0 44 48" className="-mt-[3px] ml-[29px] shrink-0">
        <rect x="2" y="14" width="29" height="24" rx="2" fill="#2fae3c" />
        <rect x="2" y="34" width="29" height="7" rx="1" fill="#1c7f2c" />
        <path d="M16.500 16a8 8 0 0 1 5 14v3h-10v-3a8 8 0 0 1 5-14z" fill="#fff" />
        <path d="M12.500 34h8v3.500h-8z" fill="#d9d9d9" />
        <circle cx="30" cy="11" r="11" fill="#f2707a" />
        <text x="30" y="16" textAnchor="middle" fontFamily="Open Sans" fontSize="14.500" fill="#222">7</text>
      </svg>
      <svg width="36" height="36" viewBox="0 0 36 36" className="ml-[305px] shrink-0">
        <defs><linearGradient id="win" x1="0" y1="0" x2="1" y2="1"><stop offset="0" stopColor="#7eeaff" /><stop offset="1" stopColor="#0a8df5" /></linearGradient></defs>
        <path d="M1 0h16v17H0V1a1 1 0 0 1 1-1zM18.500 0H34a1 1 0 0 1 1 1v16H18.500zM0 18.500h17v17H1a1 1 0 0 1-1-1zM18.500 18.500H35v16a1 1 0 0 1-1 1H18.500z" fill="url(#win)" />
      </svg>
      <div className="ml-[19px] flex h-[48px] w-[330px] shrink-0 items-center rounded-full border border-[#4c4c4c] border-t-[#6a6a6a] bg-[#3b3b3b]">
        <Ico w={24} h={24} className="ml-[16px] text-[#e0e0e0]" sw={2}><circle cx="10" cy="10" r="8.500" /><path d="M16.500 16.500l6 6" strokeWidth="2.500" /></Ico>
        <Ui w={62} className="ml-[15px] text-[20px] text-[#cfcfcf]">Search</Ui>
        <svg width="66" height="38" viewBox="0 0 66 38" className="ml-[136px] shrink-0">
          <path d="M0 31q30-4 65 1-5 5-12 5H10q-7 0-10-6z" fill="#776536" />
          <path d="M18 32L9 10M19 32l-4-14M20 32l2-16M21 32l5-11" stroke="#4f6b2a" strokeWidth="1.500" />
          <Sunflower x={9} y={8} /><Sunflower x={22} y={10} /><Sunflower x={8} y={17} r={4} /><Sunflower x={16} y={16} /><Sunflower x={26} y={19} r={4} /><Sunflower x={11} y={26} r={4} /><Sunflower x={27} y={27} r={3.5} />
          <path d="M14 26h11q2 9-5.500 10T14 26z" fill="#ecd9ae" />
          <path d="M44 4l-3 31M53 4l3 31M48.500 0v33" stroke="#a4622b" strokeWidth="1.800" />
          <rect x="39.500" y="3" width="18" height="24" fill="#f0e6d0" stroke="#b97a3c" strokeWidth="1" />
          <Sunflower x={49.5} y={11} r={3.8} /><Sunflower x={46.5} y={17} r={3.5} />
          <path d="M45.500 20h6v4h-6z" fill="#c99d4e" />
          <path d="M39 28h19" stroke="#a4622b" strokeWidth="2" />
        </svg>
      </div>
      <svg width="37" height="34" viewBox="0 0 37 34" className="ml-[18px] shrink-0">
        <defs><linearGradient id="tv" x1="0" y1="0" x2="1" y2="1"><stop offset="0" stopColor="#fff" /><stop offset="1" stopColor="#d5d5d5" /></linearGradient></defs>
        <rect x="0" y="9" width="27" height="25" rx="1.500" fill="#686868" />
        <rect x="9" y="0" width="27" height="25" rx="1.500" fill="url(#tv)" />
        <path d="M9 9h18v16H9z" fill="#9f9f9f" />
      </svg>
      <Copilot id="cpb" w={34} h={31} className="ml-[30px]" />
      <div className="relative ml-[19px] flex h-[60px] w-[60px] shrink-0 items-center justify-center rounded-[6px] border border-[#333] bg-[#292929]">
        <EdgeLogo />
        <span className="absolute bottom-0 h-[5px] w-6 rounded-full bg-[#4cc2ff]" />
      </div>
      <svg width="30" height="30" viewBox="0 0 30 30" className="ml-[21px] shrink-0"><rect width="30" height="30" rx="5" fill="#fff" /><rect x="4" y="5" width="10" height="9" rx="1" fill="#0a66d8" /><rect x="16" y="5" width="10" height="20" rx="1.500" fill="#2b88f5" /></svg>
      <svg width="36" height="34" viewBox="0 0 36 34" className="ml-[33px] shrink-0">
        <defs><linearGradient id="fd" x1="0" y1="0" x2="0" y2="1"><stop offset="0" stopColor="#ffd75e" /><stop offset="1" stopColor="#fdb924" /></linearGradient></defs>
        <path d="M0 2a1.500 1.500 0 0 1 1.500-1.500h10L15 4v5H0z" fill="#e09f0f" />
        <path d="M13 4h22a1 1 0 0 1 1 1v28a1 1 0 0 1-1 1H1a1 1 0 0 1-1-1V7h11z" fill="url(#fd)" />
        <path d="M6 34V26a3 3 0 0 1 3-3h18a3 3 0 0 1 3 3v8z" fill="#1577d1" />
        <path d="M12 28.500h13" stroke="#0b4f96" strokeWidth="2" />
      </svg>
      <span className="ml-[30px] shrink-0"><ChromeLogo /></span>
      <span className="relative ml-[30px] flex h-9 w-9 shrink-0 items-center justify-center">
        <span className="absolute h-[26px] w-[20px] bg-white" />
        <SiBrave size={36} color="#f9401a" className="relative" />
      </span>
      <svg width="36" height="36" viewBox="0 0 36 36" className="ml-[30px] shrink-0">
        <path d="M26 0v9L4 27l-3.500-2.500v-2z" fill="#0a7cc4" />
        <path d="M26 36v-9L4 9 .5 11.500v2z" fill="#1a91d8" />
        <path d="M26 0l9 4a2 2 0 0 1 1 1.500v25a2 2 0 0 1-1 1.500l-9 4z" fill="#2ba8f2" />
      </svg>
      <svg width="36" height="34" viewBox="0 0 36 34" className="ml-[30px] shrink-0">
        <circle cx="30" cy="8" r="3.700" fill="#4b53bc" /><circle cx="19" cy="6" r="5.500" fill="#7b83eb" />
        <path d="M25 13h10v10a6 6 0 0 1-10 5z" fill="#4b53bc" />
        <path d="M11 13h16a1 1 0 0 1 1 1v10a9 9 0 0 1-18 0V14a1 1 0 0 1 1-1z" fill="#7b83eb" />
        <rect x="0" y="8" width="18" height="18" rx="1.500" fill="#4048b0" />
        <text x="9" y="22" textAnchor="middle" fontFamily="Open Sans" fontWeight="700" fontSize="13.500" fill="#fff">T</text>
      </svg>
      <div className="relative ml-[30px] flex h-[70px] w-9 shrink-0 items-center justify-center">
        <ChromeLogo />
        <span className="absolute left-[19px] top-[9px] flex h-6 w-6 items-center justify-center rounded-full bg-[#5b9b34] font-['Open_Sans'] text-[13px] text-white">A</span>
        <span className="absolute bottom-[7px] h-[5px] w-[9px] rounded-full bg-[#9a9a9a]" />
      </div>
      <Ico w={18} h={12} className="ml-[117px]" sw={1.900}><path d="M1.500 10L9 2.500l7.500 7.500" /></Ico>
      <Ico w={26} h={28} className="ml-[26px]" sw={1.600}>
        <path d="M21.500 2c2 1 2 3 1 5l-9 16c-1 1.800-3.500 3-5 3 0-2-.3-4.300.8-6l8-16c1-2 2.500-3 4.200-2zM9 14c-1.500-1-4 1-3 3s1 3-2 4-3 4-1 5 3-1 3-2M22 11c3 0 3 3 1 4l2 1c1 2-1 4-4 3" />
      </Ico>
      <div className="ml-[27px] flex w-[35px] flex-col items-center text-[17.500px]">
        <Ui w={34} className="h-[23px] items-center">ENG</Ui>
        <Ui w={17} className="h-[23px] items-center">IN</Ui>
      </div>
      <Ico w={26} h={22} className="ml-[26px]" sw={1.800}>
        <path d="M1.500 8a16.500 16.500 0 0 1 23 0M5 12a11.500 11.500 0 0 1 16 0M8.500 15.500a6.500 6.500 0 0 1 9 0" /><circle cx="13" cy="19" r="1.400" fill="currentColor" />
      </Ico>
      <Ico w={24} h={20} className="ml-[11px]" sw={1.600}><path d="M1 6.500h4L11 1.500v17l-6-5H1zM15.500 6.500l7 7M22.500 6.500l-7 7" /></Ico>
      <Ico w={24} h={24} className="-mt-[4px] ml-[12px]" sw={1.700}>
        <path d="M7 7H4.500a3 3 0 0 0-3 3v8a3 3 0 0 0 3 3h12a3 3 0 0 0 3-3v-8c0-1.500-.7-2.500-2-2.900M22.500 11.500v5" />
        <path d="M4 9.500h3.500V13l3.500 1 1.500-1.500H17V18.500H4z" fill="currentColor" stroke="none" />
        <path d="M13.500 1L8 9.500h3.500L10 15.500l7-8.500h-3.700z" fill="currentColor" stroke="#1c1c1c" strokeWidth=".9" />
      </Ico>
      <div className="ml-auto mr-[29px] flex flex-col items-end text-[17.500px]">
        <Ui w={65} className="h-[24px] items-center">1:05 PM</Ui>
        <Ui w={82} className="h-[24px] items-center">3/30/2025</Ui>
      </div>
    </div>
  );
}

export default function App() {
  return (
    <div className="h-[1080px] w-[1920px] overflow-hidden bg-[#3b3b3b]">
      <TitleBar />
      <AddressBar />
      <Bookmarks />
      <PdfToolbar />
      <Viewer />
      <div className="h-[8px] border-b border-[#444]" />
      <Taskbar />
    </div>
  );
}
